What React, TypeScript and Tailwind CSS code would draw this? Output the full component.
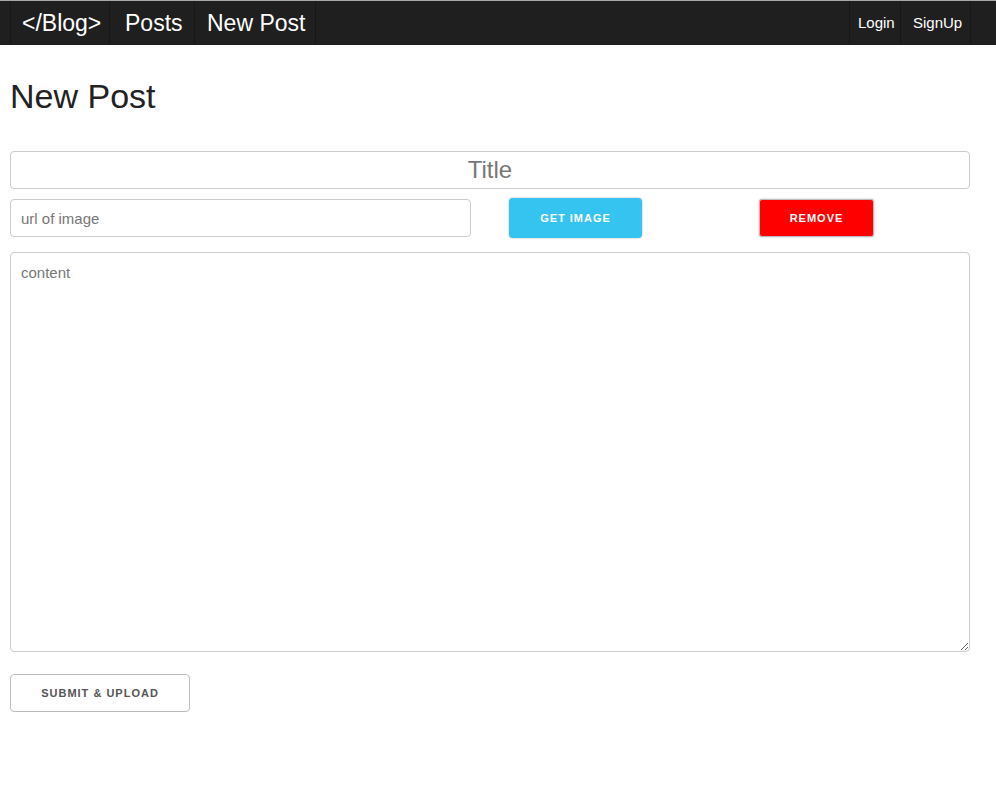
import React from "react";

export default function App() {
  const font = { fontFamily: '"Liberation Sans", Arial, sans-serif' };
  return (
    <div className="min-h-[800px] bg-white" style={font}>
      <nav className="flex h-[45px] border-t border-[#a8a8a8] bg-[#1f1f1f] text-white">
        <div className="flex pl-[10px]">
          <a className="flex w-[100px] items-center border-x border-[#171717] pl-[11px] text-[23px]">&lt;/Blog&gt;</a>
          <a className="flex w-[85px] items-center border-r border-[#171717] pl-[15px] text-[23px]">Posts</a>
          <a className="flex w-[121px] items-center border-r border-[#171717] pl-[12px] text-[23px]">New Post</a>
        </div>
        <div className="ml-auto flex pr-[25px]">
          <a className="flex w-[52px] items-center border-x border-[#171717] pl-[8px] text-[15px]">Login</a>
          <a className="flex w-[70px] items-center border-r border-[#171717] pl-[12px] text-[15px]">SignUp</a>
        </div>
      </nav>
      <main className="px-[10px] w-[980px]">
        <h1 className="mt-[29px] mb-[33px] text-[34px] leading-[44px] text-[#222]">New Post</h1>
        <input
          className="block h-[38px] w-[960px] rounded-[4px] border border-[#ccc] text-center text-[24px] text-[#555] placeholder:text-[#777] outline-none"
          placeholder="Title"
        />
        <div className="mt-[9px] flex items-center">
          <input
            className="block h-[38px] w-[461px] rounded-[4px] border border-[#ccc] px-[10px] text-[15px] text-[#555] placeholder:text-[#777] outline-none"
            placeholder="url of image"
          />
          <button className="ml-[38px] h-[40px] w-[133px] rounded-[4px] bg-[#35c4f0] text-[11px] font-bold tracking-[1px] text-white shadow-[0_0_2px_rgba(0,0,0,0.35)]">
            GET IMAGE
          </button>
          <button className="ml-[117px] h-[38px] w-[115px] rounded-[3px] border border-[#bbb] bg-[#ff0000] text-[11px] font-bold tracking-[1px] text-white shadow-[0_0_2px_rgba(0,0,0,0.3)]">
            REMOVE
          </button>
        </div>
        <textarea
          className="mt-[14px] block h-[400px] w-[960px] rounded-[4px] border border-[#ccc] px-[10px] py-[9px] text-[15px] text-[#555] placeholder:text-[#777] outline-none"
          placeholder="content"
        />
        <button className="mt-[22px] h-[38px] w-[180px] rounded-[4px] border border-[#bbb] bg-white text-[11px] font-bold tracking-[1px] text-[#555]">
          SUBMIT &amp; UPLOAD
        </button>
      </main>
    </div>
  );
}
